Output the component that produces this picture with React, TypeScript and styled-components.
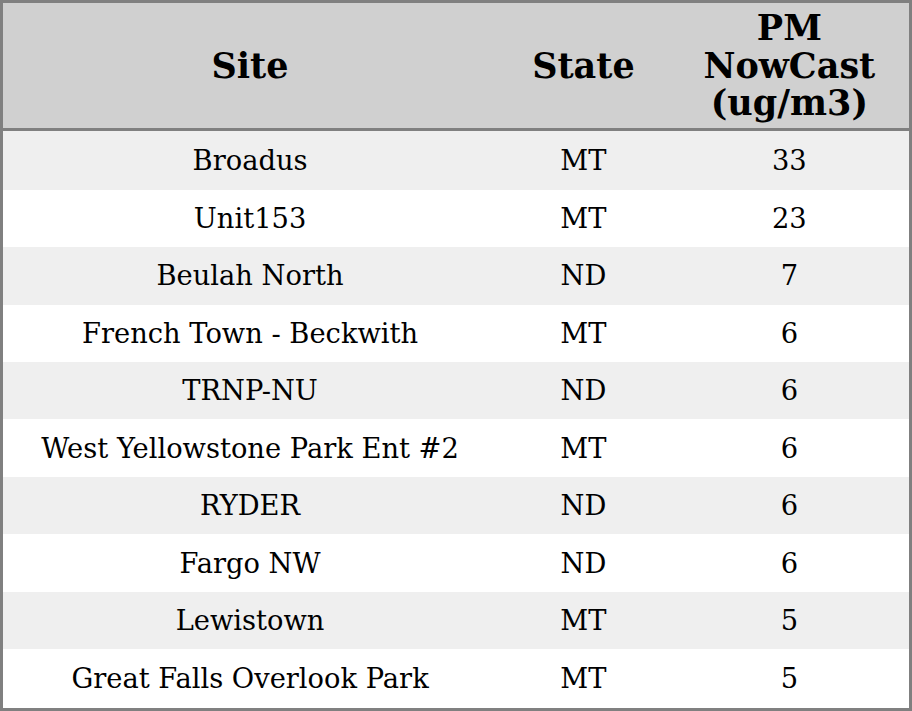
import styled, { createGlobalStyle } from 'styled-components';

const rows = [
  { site: 'Broadus', state: 'MT', pm: 33 },
  { site: 'Unit153', state: 'MT', pm: 23 },
  { site: 'Beulah North', state: 'ND', pm: 7 },
  { site: 'French Town - Beckwith', state: 'MT', pm: 6 },
  { site: 'TRNP-NU', state: 'ND', pm: 6 },
  { site: 'West Yellowstone Park Ent #2', state: 'MT', pm: 6 },
  { site: 'RYDER', state: 'ND', pm: 6 },
  { site: 'Fargo NW', state: 'ND', pm: 6 },
  { site: 'Lewistown', state: 'MT', pm: 5 },
  { site: 'Great Falls Overlook Park', state: 'MT', pm: 5 },
];

const App = () => {
  return (
    <>
      <GlobalStyle />
      <Table>
        <colgroup>
          <col style={{ width: 494 }} />
          <col style={{ width: 172 }} />
          <col style={{ width: 240 }} />
        </colgroup>
        <thead>
          <HeadRow>
            <Th>Site</Th>
            <Th>State</Th>
            <Th>
              PM
              <br />
              NowCast
              <br />
              (ug/m3)
            </Th>
          </HeadRow>
        </thead>
        <tbody>
          {rows.map((r, i) => (
            <Row key={r.site} $odd={i % 2 === 0}>
              <Td>{r.site}</Td>
              <Td>{r.state}</Td>
              <Td>{r.pm}</Td>
            </Row>
          ))}
        </tbody>
      </Table>
    </>
  );
};

export default App;

// Styling

const GlobalStyle = createGlobalStyle`
  html, body {
    margin: 0;
    padding: 0;
    background: #ffffff;
  }
  body {
    font-family: 'DejaVu Serif', serif;
    color: #000;
  }
`;

const Table = styled.table`
  width: 912px;
  height: 711px;
  border-collapse: collapse;
  table-layout: fixed;
  border: 3px solid #808080;
  box-sizing: border-box;
`;

const HeadRow = styled.tr`
  height: 128px;
  background: #d0d0d0;
  border-bottom: 3px solid #808080;
`;

const Th = styled.th`
  padding: 0;
  font-size: 35px;
  font-weight: 700;
  line-height: 37.5px;
  text-align: center;
  vertical-align: middle;
`;

const Row = styled.tr<{ $odd: boolean }>`
  background: ${(p) => (p.$odd ? '#efefef' : '#ffffff')};
`;

const Td = styled.td`
  padding: 0;
  font-size: 27.3px;
  text-align: center;
  vertical-align: middle;
  white-space: nowrap;
`;
